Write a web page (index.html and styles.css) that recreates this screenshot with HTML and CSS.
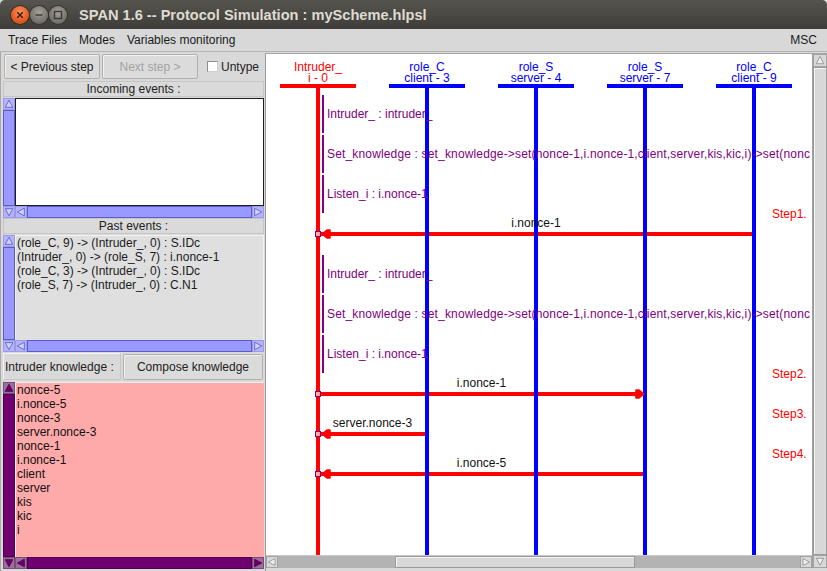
FILE: index.html
```html
<!DOCTYPE html>
<html>
<head>
<meta charset="utf-8">
<title>SPAN 1.6 -- Protocol Simulation</title>
<link rel="stylesheet" href="styles.css">
</head>
<body>
<div class="window">
  <header class="titlebar">
    <span class="wbtn close"><svg viewBox="0 0 18 18"><path d="M6.3 6.3 L11.7 11.7 M11.7 6.3 L6.3 11.7"/></svg></span>
    <span class="wbtn min"><svg viewBox="0 0 18 18"><path d="M5.5 9 H12.5"/></svg></span>
    <span class="wbtn max"><svg viewBox="0 0 18 18"><rect x="5.5" y="5.5" width="7" height="7"/></svg></span>
    <span class="title">SPAN 1.6 -- Protocol Simulation : myScheme.hlpsl</span>
  </header>
  <nav class="menubar">
    <span class="mi">Trace Files</span>
    <span class="mi">Modes</span>
    <span class="mi">Variables monitoring</span>
    <span class="spacer"></span>
    <span class="mi">MSC</span>
  </nav>
  <div class="main">
    <aside class="left">
      <div class="toolbar">
        <button class="btn">&lt; Previous step</button>
        <button class="btn disabled">Next step &gt;</button>
        <label class="check"><span class="box"></span>Untype</label>
      </div>
      <div class="section-label">Incoming events :</div>
      <div class="pane lav incoming">
        <div class="vsb">
          <span class="arr"><svg viewBox="0 0 12 12"><polygon points="6,1.5 10.5,10 1.5,10"/></svg></span>
          <span class="thumb"></span>
          <span class="arr"><svg viewBox="0 0 12 12"><polygon points="6,10.5 10.5,2 1.5,2"/></svg></span>
        </div>
        <div class="pane-body">
          <div class="list white"></div>
          <div class="hsb">
            <span class="arr"><svg viewBox="0 0 12 12"><polygon points="1.5,6 10,1.5 10,10.5"/></svg></span>
            <span class="thumb"></span>
            <span class="arr"><svg viewBox="0 0 12 12"><polygon points="10.5,6 2,1.5 2,10.5"/></svg></span>
          </div>
        </div>
      </div>
      <div class="section-label">Past events :</div>
      <div class="pane lav past">
        <div class="vsb">
          <span class="arr"><svg viewBox="0 0 12 12"><polygon points="6,1.5 10.5,10 1.5,10"/></svg></span>
          <span class="thumb"></span>
          <span class="arr"><svg viewBox="0 0 12 12"><polygon points="6,10.5 10.5,2 1.5,2"/></svg></span>
        </div>
        <div class="pane-body">
          <ul class="list grey">
            <li>(role_C, 9) -&gt; (Intruder_, 0) : S.IDc</li>
            <li>(Intruder_, 0) -&gt; (role_S, 7) : i.nonce-1</li>
            <li>(role_C, 3) -&gt; (Intruder_, 0) : S.IDc</li>
            <li>(role_S, 7) -&gt; (Intruder_, 0) : C.N1</li>
          </ul>
          <div class="hsb">
            <span class="arr"><svg viewBox="0 0 12 12"><polygon points="1.5,6 10,1.5 10,10.5"/></svg></span>
            <span class="thumb"></span>
            <span class="arr"><svg viewBox="0 0 12 12"><polygon points="10.5,6 2,1.5 2,10.5"/></svg></span>
          </div>
        </div>
      </div>
      <div class="knowrow">
        <span class="knowlabel">Intruder knowledge :</span>
        <button class="btn compose">Compose knowledge</button>
      </div>
      <div class="pane pur know">
        <div class="vsb">
          <span class="arr"><svg viewBox="0 0 12 12"><polygon points="6,1.5 10.5,10 1.5,10"/></svg></span>
          <span class="thumb"></span>
          <span class="arr"><svg viewBox="0 0 12 12"><polygon points="6,10.5 10.5,2 1.5,2"/></svg></span>
        </div>
        <div class="pane-body">
          <ul class="list pink">
            <li>nonce-5</li>
            <li>i.nonce-5</li>
            <li>nonce-3</li>
            <li>server.nonce-3</li>
            <li>nonce-1</li>
            <li>i.nonce-1</li>
            <li>client</li>
            <li>server</li>
            <li>kis</li>
            <li>kic</li>
            <li>i</li>
          </ul>
          <div class="hsb">
            <span class="arr"><svg viewBox="0 0 12 12"><polygon points="1.5,6 10,1.5 10,10.5"/></svg></span>
            <span class="thumb"></span>
            <span class="arr"><svg viewBox="0 0 12 12"><polygon points="10.5,6 2,1.5 2,10.5"/></svg></span>
          </div>
        </div>
      </div>
    </aside>

    <section class="diagram">
      <div class="dcol">
        <div class="canvas">
          <svg class="msc" width="546" height="501" viewBox="266 54 546 501">
            <!-- header bars -->
            <rect class="r" x="280" y="84" width="76" height="4"/>
            <rect class="b" x="389" y="84" width="76" height="4"/>
            <rect class="b" x="498" y="84" width="76" height="4"/>
            <rect class="b" x="607" y="84" width="76" height="4"/>
            <rect class="b" x="716" y="84" width="76" height="4"/>
            <!-- messages -->
            <rect class="r" x="320" y="232" width="434" height="4"/>
            <rect class="r" x="318" y="392" width="320" height="4"/>
            <rect class="r" x="320" y="432" width="107" height="4"/>
            <rect class="r" x="320" y="472" width="325" height="4"/>
            <!-- lifelines -->
            <rect class="r" x="316" y="88" width="4" height="467"/>
            <rect class="b" x="425" y="88" width="4" height="467"/>
            <rect class="b" x="534" y="88" width="4" height="467"/>
            <rect class="b" x="643" y="88" width="4" height="467"/>
            <rect class="b" x="752" y="88" width="4" height="467"/>
            <!-- arrow heads -->
            <polygon class="ah" points="322,234 327,230 330,230 330,238 327,238"/>
            <polygon class="ah" points="644,394 639,390 636,390 636,398 639,398"/>
            <polygon class="ah" points="322,434 327,430 330,430 330,438 327,438"/>
            <polygon class="ah" points="322,474 327,470 330,470 330,478 327,478"/>
            <!-- event squares -->
            <rect class="sq" x="315.5" y="231.5" width="5" height="5"/>
            <rect class="sq" x="315.5" y="391.5" width="5" height="5"/>
            <rect class="sq" x="315.5" y="431.5" width="5" height="5"/>
            <rect class="sq" x="315.5" y="471.5" width="5" height="5"/>
            <!-- action markers -->
            <rect class="p" x="322" y="95" width="2" height="38"/>
            <rect class="p" x="322" y="135" width="2" height="38"/>
            <rect class="p" x="322" y="175" width="2" height="38"/>
            <rect class="p" x="322" y="255" width="2" height="38"/>
            <rect class="p" x="322" y="295" width="2" height="38"/>
            <rect class="p" x="322" y="335" width="2" height="38"/>
            <!-- headers -->
            <text class="hd red" x="318" y="71">Intruder_</text>
            <text class="hd red" x="318" y="82">i - 0</text>
            <text class="hd blue" x="427" y="71">role_C</text>
            <text class="hd blue" x="427" y="82">client - 3</text>
            <text class="hd blue" x="536" y="71">role_S</text>
            <text class="hd blue" x="536" y="82">server - 4</text>
            <text class="hd blue" x="645" y="71">role_S</text>
            <text class="hd blue" x="645" y="82">server - 7</text>
            <text class="hd blue" x="754" y="71">role_C</text>
            <text class="hd blue" x="754" y="82">client - 9</text>
            <!-- actions -->
            <text class="act" x="327" y="118">Intruder_ : intruder_</text>
            <text class="act" x="327" y="158" textLength="483" lengthAdjust="spacing">Set_knowledge : set_knowledge-&gt;set(nonce-1,i.nonce-1,client,server,kis,kic,i)-&gt;set(nonc</text>
            <text class="act" x="327" y="198">Listen_i : i.nonce-1</text>
            <text class="act" x="327" y="278">Intruder_ : intruder_</text>
            <text class="act" x="327" y="318" textLength="483" lengthAdjust="spacing">Set_knowledge : set_knowledge-&gt;set(nonce-1,i.nonce-1,client,server,kis,kic,i)-&gt;set(nonc</text>
            <text class="act" x="327" y="358">Listen_i : i.nonce-1</text>
            <!-- message labels -->
            <text class="msg" x="536" y="227">i.nonce-1</text>
            <text class="msg" x="481.5" y="387">i.nonce-1</text>
            <text class="msg" x="372.5" y="427">server.nonce-3</text>
            <text class="msg" x="481.5" y="467">i.nonce-5</text>
            <!-- steps -->
            <text class="step" x="772" y="218">Step1.</text>
            <text class="step" x="772" y="378">Step2.</text>
            <text class="step" x="772" y="418">Step3.</text>
            <text class="step" x="772" y="458">Step4.</text>
          </svg>
        </div>
        <div class="hsb gsb">
          <span class="arr"><svg viewBox="0 0 12 13"><polygon points="1.5,6.5 10,2 10,11"/></svg></span>
          <span class="track lead"></span>
          <span class="thumb"></span>
          <span class="track"></span>
          <span class="arr"><svg viewBox="0 0 12 13"><polygon points="10.5,6.5 2,2 2,11"/></svg></span>
        </div>
      </div>
      <div class="vsb gsb">
        <span class="arr"><svg viewBox="0 0 15 13"><polygon points="7.5,1.5 12,10.5 3,10.5"/></svg></span>
        <span class="thumb"></span>
        <span class="arr"><svg viewBox="0 0 15 13"><polygon points="7.5,11 12,2.5 3,2.5"/></svg></span>
      </div>
    </section>
  </div>
</div>
</body>
</html>
```
FILE: styles.css
```css
* {
  box-sizing: border-box;
  margin: 0;
  padding: 0;
}

html, body {
  width: 827px;
  height: 571px;
  overflow: hidden;
}

body {
  font-family: "Liberation Sans", Arial, sans-serif;
  font-size: 12px;
  color: #1c1c1c;
  background: #d9d9d9;
}

.window {
  width: 827px;
  height: 571px;
  display: flex;
  flex-direction: column;
  background: #d9d9d9;
}

/* ---------- title bar ---------- */
.titlebar {
  height: 29px;
  flex: none;
  display: flex;
  align-items: center;
  padding-left: 11px;
  background: linear-gradient(#55544e, #3e3d39);
  border-radius: 5px 5px 0 0;
  color: #dfdbd2;
}

.wbtn {
  width: 18px;
  height: 18px;
  border-radius: 50%;
  margin-right: 1px;
  display: flex;
  flex: none;
}

.wbtn svg {
  width: 18px;
  height: 18px;
}

.close {
  background: radial-gradient(circle at 50% 35%, #f79263 0%, #e65f25 55%, #c4470f 100%);
  box-shadow: 0 0 0 1px #3a2a22;
}

.close path {
  stroke: #3c1c0c;
  stroke-width: 1.5;
  fill: none;
}

.min, .max {
  background: radial-gradient(circle at 50% 35%, #a3a19a 0%, #7b7972 55%, #5f5d57 100%);
  box-shadow: 0 0 0 1px #34332f;
}

.min path, .max rect {
  stroke: #3a3935;
  stroke-width: 1.4;
  fill: none;
}

.title {
  margin-left: 11px;
  font-weight: bold;
  font-size: 14.6px;
  white-space: nowrap;
}

/* ---------- menu bar ---------- */
.menubar {
  height: 23px;
  flex: none;
  display: flex;
  align-items: center;
  padding: 0 4px 1px 2px;
  background: #d8d8d8;
  border-bottom: 1px solid #b4b4b4;
  font-size: 12px;
  color: #1a1a1a;
}

.mi {
  padding: 0 6px;
  white-space: nowrap;
}

.spacer {
  flex: 1;
}

/* ---------- main ---------- */
.main {
  flex: 1;
  display: flex;
  min-height: 0;
}

.left {
  width: 265px;
  flex: none;
  display: flex;
  flex-direction: column;
  border-left: 1px solid #a9a9a9;
  padding: 0 1px 2px 2px;
}

.toolbar {
  height: 29px;
  flex: none;
  display: flex;
  align-items: center;
  gap: 2px;
  padding-left: 1px;
}

.btn {
  height: 25px;
  width: 96px;
  font-family: "Liberation Sans", Arial, sans-serif;
  font-size: 12px;
  color: #222;
  background: #dbdbdb;
  border: 1px solid #b0b0b0;
  border-radius: 2px;
  box-shadow: inset 1px 1px 0 #f0f0f0;
}

.btn.disabled {
  color: #a3a3a3;
}

.check {
  display: flex;
  align-items: center;
  margin-left: 7px;
  gap: 3px;
  color: #222;
}

.box {
  width: 11px;
  height: 11px;
  background: #fff;
  border: 1px solid #8c8c8c;
  border-right-color: #d0d0d0;
  border-bottom-color: #d0d0d0;
}

.section-label {
  height: 16px;
  flex: none;
  text-align: center;
  line-height: 14px;
  background: #dadada;
  border: 1px solid #c6c6c6;
  color: #222;
}

/* ---------- list panes ---------- */
.pane {
  display: flex;
  flex: none;
  padding-top: 1px;
}

.incoming { height: 121px; }
.past { height: 118px; }
.know { flex: 1; min-height: 0; }

.pane-body {
  flex: 1;
  min-width: 0;
  display: flex;
  flex-direction: column;
}

.list {
  flex: 1;
  min-height: 0;
  list-style: none;
  line-height: 14px;
  padding-left: 1px;
  overflow: hidden;
  white-space: nowrap;
}

.list.white {
  background: #fff;
  border: 1px solid #1e1e1e;
}

.list.grey {
  background: #dfdfdf;
  border: 1px solid #f3f3f3;
  border-bottom: none;
  color: #1c1c1c;
}

.list.pink {
  background: #ffaaaa;
  border-left: 1px solid #f0f0f0;
  border-top: 1px solid #f0f0f0;
  color: #111;
}

.vsb {
  width: 12px;
  flex: none;
  display: flex;
  flex-direction: column;
}

.hsb {
  height: 12px;
  flex: none;
  display: flex;
}

.arr {
  width: 12px;
  height: 12px;
  flex: none;
  display: flex;
  background: var(--btn);
  border: 1px solid var(--btnb);
}

.arr svg {
  width: 100%;
  height: 100%;
}

.arr polygon {
  fill: var(--tri);
  stroke: var(--tris);
  stroke-width: 1;
}

.thumb {
  flex: 1;
  background: var(--thumb);
  border: 1px solid var(--thumbb);
}

.lav {
  --btn: #b3b3ff;
  --btnb: #9a9ae6;
  --tri: #d2d2ff;
  --tris: #5a5ac8;
  --thumb: #9999ff;
  --thumbb: #5c5cc6;
}

.pur {
  --btn: #9b6e9b;
  --btnb: #7a4a7a;
  --tri: #6e006e;
  --tris: #4a004a;
  --thumb: #700070;
  --thumbb: #4f004f;
}

.knowrow {
  height: 29px;
  flex: none;
  display: flex;
  align-items: center;
  gap: 2px;
}

.knowlabel {
  width: 118px;
  height: 27px;
  display: flex;
  align-items: center;
  padding-left: 1px;
  border: 1px solid #c8c8c8;
  border-left-color: #f0f0f0;
  border-top-color: #f0f0f0;
  color: #222;
  white-space: nowrap;
}

.btn.compose {
  width: 140px;
  height: 26px;
}

/* ---------- diagram ---------- */
.diagram {
  flex: 1;
  display: flex;
  margin-top: 1px;
  border-left: 1px solid #9c9c9c;
  border-top: 1px solid #a6a6a6;
  padding-bottom: 3px;
}

.dcol {
  flex: 1;
  min-width: 0;
  display: flex;
  flex-direction: column;
}

.canvas {
  flex: 1;
  background: #fff;
  overflow: hidden;
}

.msc {
  display: block;
}

.msc .r { fill: #ff0000; }
.msc .b { fill: #0000ff; }
.msc .p { fill: #800080; }
.msc .ah {
  fill: #ff0000;
  stroke: #ff0000;
  stroke-width: 1.5;
  stroke-linejoin: round;
}
.msc .sq {
  fill: #ffaaaa;
  stroke: #800080;
  stroke-width: 1;
}

.msc text {
  font-family: "Liberation Sans", Arial, sans-serif;
  font-size: 12px;
}

.msc .hd { text-anchor: middle; }
.msc .red { fill: #ff0000; }
.msc .blue { fill: #0000ff; }
.msc .act { fill: #800080; }
.msc .msg { fill: #111; text-anchor: middle; }
.msc .step { fill: #ff0000; }

.gsb {
  --btn: #d8d8d8;
  --btnb: #a2a2a2;
  --tri: #f0f0f0;
  --tris: #8a8a8a;
  --thumb: #d8d8d8;
  --thumbb: #9a9a9a;
}

.hsb.gsb {
  height: 13px;
  background: #b3b3b3;
  border-top: 1px solid #c8c8c8;
}

.hsb.gsb .arr {
  height: 12px;
}

.hsb.gsb .track {
  flex: 1;
}

.hsb.gsb .track.lead {
  flex: none;
  width: 117px;
}

.hsb.gsb .thumb {
  flex: none;
  width: 240px;
  box-shadow: inset 1px 1px 0 #f4f4f4;
}

.vsb.gsb {
  width: 15px;
  background: #b3b3b3;
  border-left: 1px solid #a0a0a0;
}

.vsb.gsb .arr {
  width: 14px;
  height: 13px;
}

.vsb.gsb .thumb {
  box-shadow: inset 1px 1px 0 #f4f4f4;
}
```
